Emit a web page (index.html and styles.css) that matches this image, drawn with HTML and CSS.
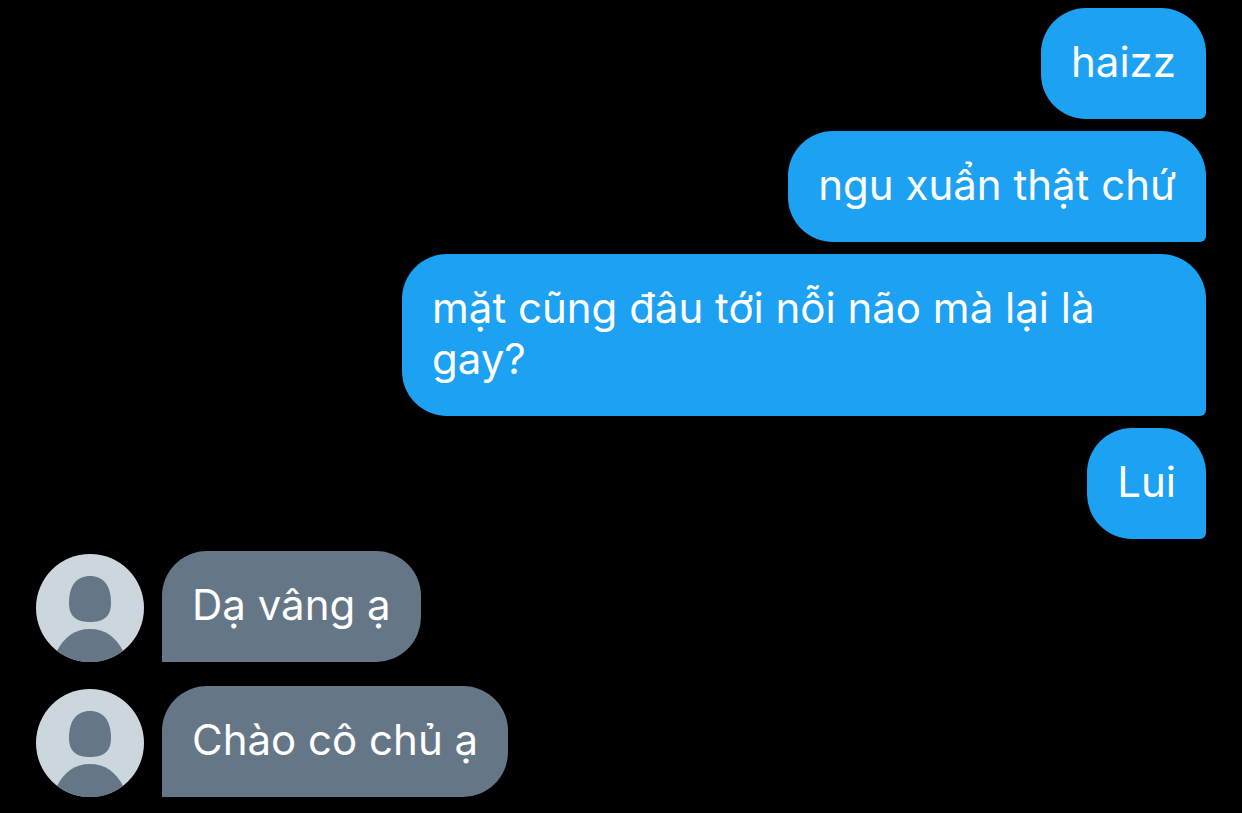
FILE: index.html
```
<!DOCTYPE html>
<html lang="vi">
<head>
<meta charset="utf-8">
<meta name="viewport" content="width=device-width, initial-scale=1">
<title>Tin nhắn</title>
<link rel="stylesheet" href="styles.css">
</head>
<body>
<main class="chat">
  <p class="bubble sent">haizz</p>
  <p class="bubble sent">ngu xuẩn thật chứ</p>
  <p class="bubble sent">mặt cũng đâu tới nỗi não mà lại là gay?</p>
  <p class="bubble sent">Lui</p>
  <div class="row">
    <svg class="avatar" viewBox="0 0 108 108" aria-hidden="true">
      <circle cx="54" cy="54" r="54" fill="#ccd6dd"/>
      <path d="M54 22C67 22 75 31 75 49C75 63 67 68 54 68S33 63 33 49C33 31 41 22 54 22Z" fill="#657786"/>
      <path d="M21 97C28 83 39 75 54 75S80 83 87 97A54 54 0 0 1 21 97Z" fill="#657786"/>
    </svg>
    <p class="bubble received">Dạ vâng ạ</p>
  </div>
  <div class="row">
    <svg class="avatar" viewBox="0 0 108 108" aria-hidden="true">
      <circle cx="54" cy="54" r="54" fill="#ccd6dd"/>
      <path d="M54 22C67 22 75 31 75 49C75 63 67 68 54 68S33 63 33 49C33 31 41 22 54 22Z" fill="#657786"/>
      <path d="M21 97C28 83 39 75 54 75S80 83 87 97A54 54 0 0 1 21 97Z" fill="#657786"/>
    </svg>
    <p class="bubble received">Chào cô chủ ạ</p>
  </div>
</main>
</body>
</html>
```
FILE: styles.css
```
* { box-sizing: border-box; }
body {
  margin: 0;
  background: #000;
  color: #fff;
  font-family: Inter, "Noto Sans", sans-serif;
  font-size: 42px;
  line-height: 51px;
}
.chat {
  display: flex;
  flex-direction: column;
  gap: 12px;
  padding: 8px 36px 16px;
}
.bubble {
  margin: 0;
  padding: 28px 30px 32px;
}
.sent {
  align-self: flex-end;
  max-width: calc(100% - 366px);
  background: #1da1f2;
  border-radius: 45px 45px 6px 45px;
}
.row {
  display: flex;
  align-items: flex-end;
  gap: 18px;
}
.row + .row { margin-top: 12px; }
.avatar {
  width: 108px;
  height: 108px;
  flex: none;
}
.received {
  background: #657786;
  border-radius: 45px 45px 45px 0;
}
```
